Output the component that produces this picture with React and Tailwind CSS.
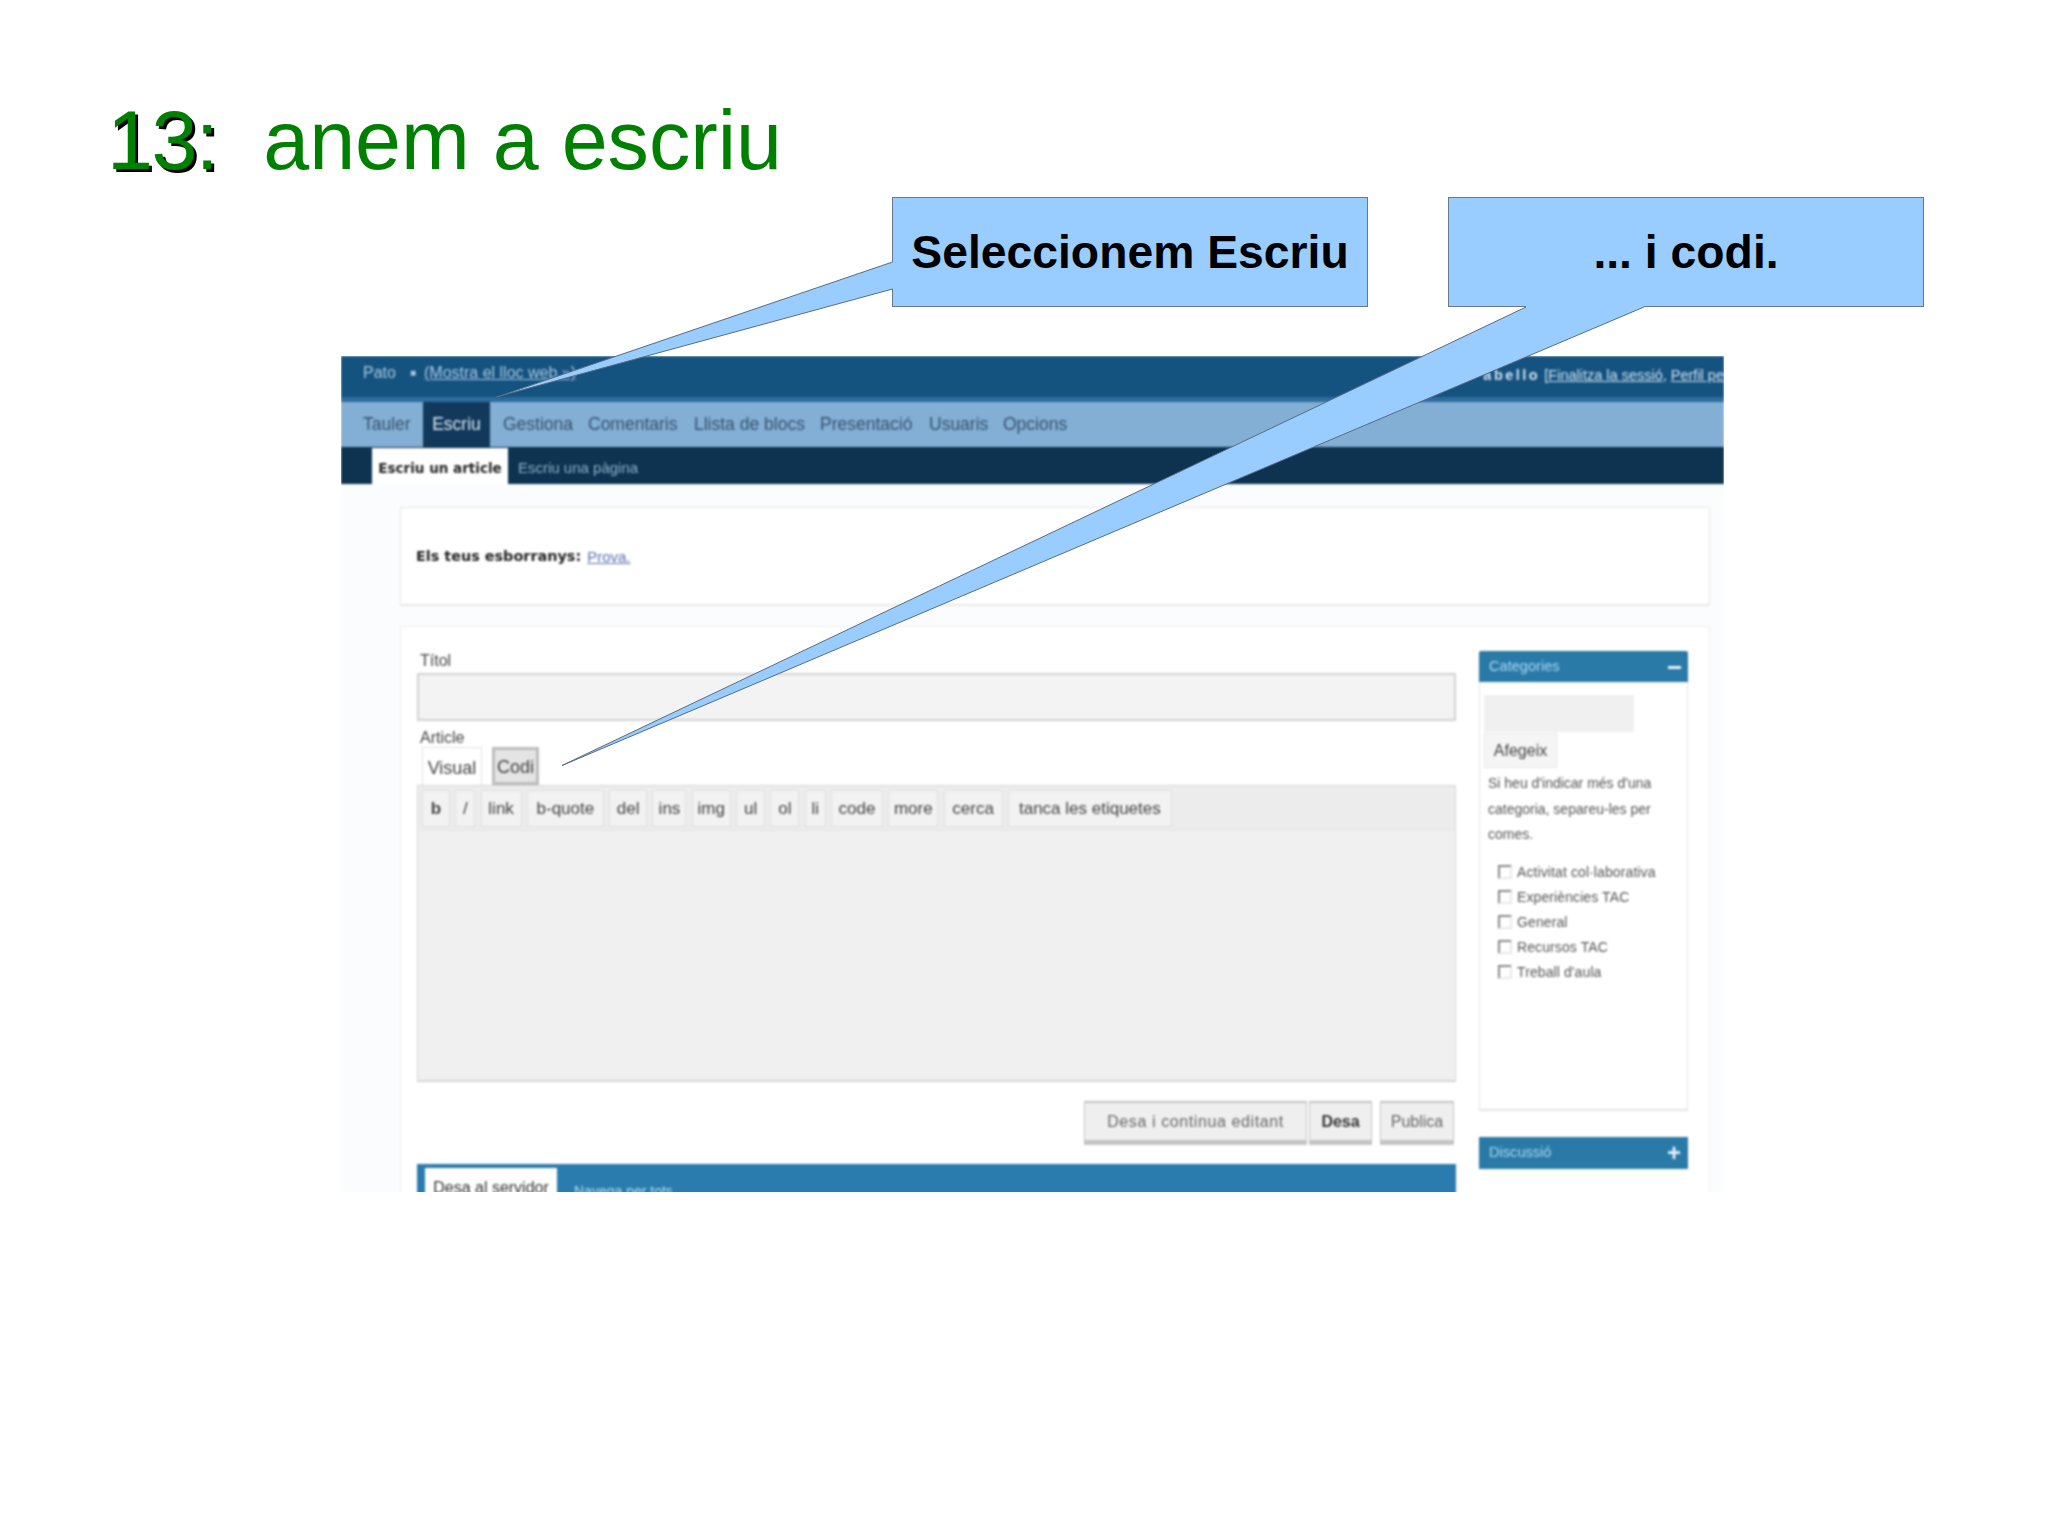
import React from 'react';

const navItems = [
  { label: 'Tauler', className: 'w-[82px] pl-[22px]' },
  { label: 'Escriu', className: 'w-[67px] bg-[#12395c] text-[#dfe9f2] justify-center' },
  { label: 'Gestiona', className: 'w-[98px] pl-[13px]' },
  { label: 'Comentaris', className: 'w-[106px]' },
  { label: 'Llista de blocs', className: 'w-[126px]' },
  { label: 'Presentació', className: 'w-[109px]' },
  { label: 'Usuaris', className: 'w-[74px]' },
  { label: 'Opcions', className: 'w-[70px]' },
];

const toolbarItems = [
  { label: 'b', className: 'w-[28px] font-bold text-[#222]' },
  { label: '/', className: 'w-[20px]' },
  { label: 'link', className: 'w-[41px] text-[#6a5fc4]' },
  { label: 'b-quote', className: 'w-[77px]' },
  { label: 'del', className: 'w-[38px]' },
  { label: 'ins', className: 'w-[34px]' },
  { label: 'img', className: 'w-[39px]' },
  { label: 'ul', className: 'w-[29px]' },
  { label: 'ol', className: 'w-[29px]' },
  { label: 'li', className: 'w-[21px]' },
  { label: 'code', className: 'w-[52px]' },
  { label: 'more', className: 'w-[50px]' },
  { label: 'cerca', className: 'w-[59px]' },
  { label: 'tanca les etiquetes', className: 'w-[164px]' },
];

const categories = ['Activitat col·laborativa', 'Experiències TAC', 'General', 'Recursos TAC', 'Treball d\'aula'];

function Callouts() {
  // les cues dels globus passen per sobre de la captura
  return (
    <svg className="absolute left-0 top-0 z-10" width="2048" height="1535" viewBox="0 0 2048 1535">
      <polygon points="892.5,262 496.5,397 892.5,289 895,289 895,262" fill="#99ccff" />
      <polyline points="892.5,262 496.5,397 892.5,289" fill="none" stroke="#5a6c80" strokeWidth="1" />
      <polygon points="1526,307 562,765.5 1644,307 1644,304 1526,304" fill="#99ccff" />
      <polyline points="1526,307 562,765.5 1644,307" fill="none" stroke="#5a6c80" strokeWidth="1" />
    </svg>
  );
}

function AdminScreenshot() {
  return (
    <div className="ml-[341px] mt-[49px] w-[1383px] h-[836px] overflow-hidden bg-[#fbfcfd] font-['Liberation_Sans',sans-serif]">
      <div className="blur-[0.8px]">
        <div className="h-[41px] bg-[#14527f] flex items-center pl-[22px] pb-[8px] text-[16px] text-[#a9c8e2] relative">
          <span>Pato</span>
          <span className="ml-[14px] text-[10px]">■</span>
          <span className="ml-[8px] underline">(Mostra el lloc web »)</span>
          <span className="absolute right-0 top-[9px] text-[14.5px] text-[#d0e2f0] whitespace-nowrap">
            <span className="font-bold tracking-[2.5px]">abello</span> [<span className="underline">Finalitza la sessió</span>, <span className="underline">Perfil pe</span>
          </span>
        </div>
        <div className="h-[5px] bg-[#2c6c9e]" />
        <div className="h-[45px] bg-[#83afd4] flex items-stretch text-[17.5px] text-[#345270]">
          {navItems.map((item) => (
            <div key={item.label} className={`flex items-center whitespace-nowrap ${item.className}`}>{item.label}</div>
          ))}
        </div>
        <div className="h-[37px] bg-[#0d3350] flex items-end pl-[31px] text-[15px] text-[#8fb0c9]">
          <div className="h-[36px] w-[136px] pt-[4px] bg-white flex items-center justify-center font-['DejaVu_Sans',sans-serif] font-bold text-[13.5px] text-[#222]">Escriu un article</div>
          <div className="h-[36px] pt-[4px] flex items-center ml-[10px] whitespace-nowrap">Escriu una pàgina</div>
        </div>

        <div className="ml-[59px] w-[1310px] mt-[23px] h-[99px] bg-white border border-[#e8e8e8] border-b-2 flex items-center pl-[15px] pt-[2px] font-['DejaVu_Sans',sans-serif] text-[14.4px] text-[#222]">
          <span className="font-bold">Els teus esborranys:</span>
          <span className="ml-[6px] text-[#5a6fb0] underline font-['Liberation_Sans',sans-serif] text-[15px]">Prova.</span>
        </div>

        <div className="ml-[59px] w-[1310px] mt-[20px] bg-white border border-[#eeeeee] flex pl-[16px]">
          <div className="w-[1039px] pt-[26px]">
            <div className="h-[20px] pl-[3px] text-[16px] leading-[15px] text-[#444]">Títol</div>
            <div className="h-[48px] bg-[#f3f3f3] border-2 border-[#d2d2d2]" />
            <div className="mt-[8px] h-[18px] pl-[3px] text-[16px] leading-[18px] text-[#444]">Article</div>
            <div className="h-[38px] flex items-end pl-[5px]">
              <div className="w-[60px] h-[38px] pt-[3px] bg-white border border-[#e2e2e2] border-b-0 flex items-center justify-center text-[18px] text-[#444]">Visual</div>
              <div className="ml-[10px] w-[47px] h-[38px] pt-[2px] bg-[#e4e4e4] border-[3px] border-[#bdbdbd] flex items-center justify-center text-[18px] text-[#444]">Codi</div>
            </div>
            <div className="h-[297px] bg-[#f0f0f0] border border-[#d6d6d6] border-b-2">
              <div className="h-[45px] pt-[1px] bg-[#ececec] border-b border-[#e6e6e6] flex items-center gap-[5.3px] pl-[4px]">
                {toolbarItems.map((item) => (
                  <div key={item.label} className={`h-[37px] bg-[#f2f2f2] border border-[#e0e0e0] flex items-center justify-center whitespace-nowrap text-[17px] text-[#444] ${item.className}`}>{item.label}</div>
                ))}
              </div>
            </div>
            <div className="mt-[19px] pr-[2px] flex justify-end">
              <div className="w-[223px] h-[44px] bg-[#efefef] border-b-[5px] border-t-2 border-x border-[#c4c4c4] flex items-center justify-center text-[16px] text-[#666] tracking-[0.6px]">Desa i continua editant</div>
              <div className="ml-[2px] w-[63px] h-[44px] bg-[#efefef] border-b-[5px] border-t-2 border-x border-[#c4c4c4] flex items-center justify-center font-bold text-[16px] text-[#333]">Desa</div>
              <div className="ml-[8px] w-[74px] h-[44px] bg-[#efefef] border-b-[5px] border-t-2 border-x border-[#c4c4c4] flex items-center justify-center text-[16px] text-[#666]">Publica</div>
            </div>
            <div className="mt-[19px] h-[60px] bg-[#2b7cae] flex items-start pl-[8px] pt-[4px]">
              <div className="w-[132px] h-[40px] bg-white flex items-center justify-center text-[16px] text-[#333]">Desa al servidor</div>
              <div className="ml-[17px] mt-[8px] h-[30px] flex items-center text-[14px] text-[#b5dcf2]">Navega per tots</div>
            </div>
          </div>

          <div className="ml-[23px] w-[209px] pt-[24px]">
            <div className="h-[31px] pt-[1px] bg-[#2a7aa8] rounded-t-[2px] flex items-center justify-between pl-[10px] pr-[7px] text-[14.6px] text-[#a8d8f2]">
              <span>Categories</span>
              <span className="w-[13px] h-[3px] bg-[#e4f3fb]" />
            </div>
            <div className="h-[429px] border border-t-0 border-[#e4e4e4] border-b-2 pt-[13px] pl-[4px] text-[#555]">
              <div className="w-[150px] h-[37px] bg-[#f0f0f0]" />
              <div className="mt-[1px] w-[73px] h-[35px] bg-[#f5f5f5] border border-[#e8e8e8] flex items-center justify-center text-[16px] text-[#444]">Afegeix</div>
              <p className="mt-[3px] pl-[4px] w-[190px] text-[14px] leading-[25.5px]">Si heu d'indicar més d'una categoria, separeu-les per comes.</p>
              <div className="mt-[17px] pl-[14px] flex flex-col gap-[11.2px]">
                {categories.map((name) => (
                  <div key={name} className="h-[14px] flex items-center whitespace-nowrap text-[14px] leading-[14px] tracking-[0.1px]">
                    <span className="w-[14px] h-[14px] border-2 border-[#888] border-r-[#e8e8e8] border-b-[#e8e8e8] mr-[5px]" />
                    {name}
                  </div>
                ))}
              </div>
            </div>
            <div className="mt-[26px] h-[32px] bg-[#2a7aa8] flex items-center justify-between pl-[10px] pr-[7px] text-[14.6px] text-[#a8d8f2]">
              <span>Discussió</span>
              <span className="text-[24px] leading-none font-bold text-[#e4f3fb]">+</span>
            </div>
          </div>
        </div>
      </div>
    </div>
  );
}

export default function App() {
  return (
    <div className="relative w-[2048px] h-[1535px] overflow-hidden bg-white font-['Liberation_Sans',sans-serif]">
      <h1 className="h-[197px] pl-[107px] pt-[96px] text-[82.6px] leading-[90px] whitespace-pre text-[#008000]">
        <span className="tracking-[-1.5px] [text-shadow:3px_3px_0_#000]">13:</span>
        {'  anem a escriu'}
      </h1>
      <div className="flex pl-[892px] gap-[80px] h-[110px] text-[46.3px] font-bold text-black">
        <div className="w-[476px] pt-[2px] bg-[#99ccff] border border-[#68788a] flex items-center justify-center">Seleccionem Escriu</div>
        <div className="w-[476px] pt-[2px] bg-[#99ccff] border border-[#68788a] flex items-center justify-center">... i codi.</div>
      </div>
      <AdminScreenshot />
      <Callouts />
    </div>
  );
}
